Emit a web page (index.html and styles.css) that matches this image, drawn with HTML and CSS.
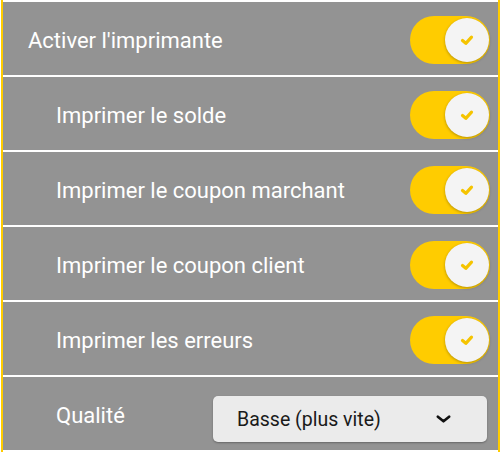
FILE: index.html
```html
<!DOCTYPE html>
<html lang="fr">
<head>
<meta charset="utf-8">
<link rel="stylesheet" href="styles.css">
</head>
<body>
<div class="panel">
  <div class="row">
    <span class="label">Activer l'imprimante</span>
    <span class="toggle"><span class="knob"><svg viewBox="0 0 16 16" width="16" height="16"><path d="M3.5 8.5 L6.8 11.3 L12.5 5.2" fill="none" stroke="#f5c400" stroke-width="3.2" stroke-linecap="round" stroke-linejoin="round"/></svg></span></span>
  </div>
  <div class="row sub">
    <span class="label">Imprimer le solde</span>
    <span class="toggle"><span class="knob"><svg viewBox="0 0 16 16" width="16" height="16"><path d="M3.5 8.5 L6.8 11.3 L12.5 5.2" fill="none" stroke="#f5c400" stroke-width="3.2" stroke-linecap="round" stroke-linejoin="round"/></svg></span></span>
  </div>
  <div class="row sub">
    <span class="label">Imprimer le coupon marchant</span>
    <span class="toggle"><span class="knob"><svg viewBox="0 0 16 16" width="16" height="16"><path d="M3.5 8.5 L6.8 11.3 L12.5 5.2" fill="none" stroke="#f5c400" stroke-width="3.2" stroke-linecap="round" stroke-linejoin="round"/></svg></span></span>
  </div>
  <div class="row sub">
    <span class="label">Imprimer le coupon client</span>
    <span class="toggle"><span class="knob"><svg viewBox="0 0 16 16" width="16" height="16"><path d="M3.5 8.5 L6.8 11.3 L12.5 5.2" fill="none" stroke="#f5c400" stroke-width="3.2" stroke-linecap="round" stroke-linejoin="round"/></svg></span></span>
  </div>
  <div class="row sub">
    <span class="label">Imprimer les erreurs</span>
    <span class="toggle"><span class="knob"><svg viewBox="0 0 16 16" width="16" height="16"><path d="M3.5 8.5 L6.8 11.3 L12.5 5.2" fill="none" stroke="#f5c400" stroke-width="3.2" stroke-linecap="round" stroke-linejoin="round"/></svg></span></span>
  </div>
  <div class="row sub last">
    <span class="label">Qualité</span>
    <div class="select">
      <span class="select-text">Basse (plus vite)</span>
      <svg class="chev" viewBox="0 0 16 8" width="15" height="8"><path d="M2 1.5 L8 6.5 L14 1.5" fill="none" stroke="#111" stroke-width="2.8" stroke-linecap="round" stroke-linejoin="round"/></svg>
    </div>
  </div>
</div>
</body>
</html>
```

FILE: styles.css
```css
html, body {
  margin: 0;
  padding: 0;
  background: #ffffff;
}
body {
  font-family: Roboto, "Noto Sans", sans-serif;
  width: 501px;
  height: 453px;
  overflow: hidden;
}
.panel {
  margin-left: 1px;
  width: 499px;
  box-sizing: border-box;
  border-left: 2px solid #ffcc00;
  border-right: 2px solid #ffcc00;
  background: #939393;
}
.row {
  box-sizing: border-box;
  height: 75px;
  border-top: 2px solid #ffffff;
  display: flex;
  align-items: center;
  justify-content: space-between;
  padding: 3px 8px 0 25px;
}
.row.last {
  height: 77px;
  border-bottom: 2px solid #ffffff;
}
.row.sub {
  padding-left: 53px;
}
.label {
  color: #ffffff;
  font-size: 22px;
}
.toggle {
  width: 80px;
  height: 48px;
  border-radius: 24px;
  background: #ffcc00;
  display: flex;
  align-items: center;
  justify-content: flex-end;
  padding-right: 1px;
  box-sizing: border-box;
}
.knob {
  width: 44px;
  height: 44px;
  border-radius: 50%;
  background: #f4f4f4;
  box-shadow: 0 1px 3px rgba(0,0,0,0.3);
  display: flex;
  align-items: center;
  justify-content: center;
}
.select {
  width: 274px;
  height: 46px;
  margin-right: 3px;
  margin-top: 8px;
  box-sizing: border-box;
  background: #ebebeb;
  border-radius: 5px;
  box-shadow: 0 1px 2px rgba(0,0,0,0.3);
  display: flex;
  align-items: center;
  justify-content: space-between;
  padding: 0 36px 0 24px;
}
.select-text {
  color: #1a1a1a;
  font-size: 19.5px;
}
.chev {
  display: block;
}
```
